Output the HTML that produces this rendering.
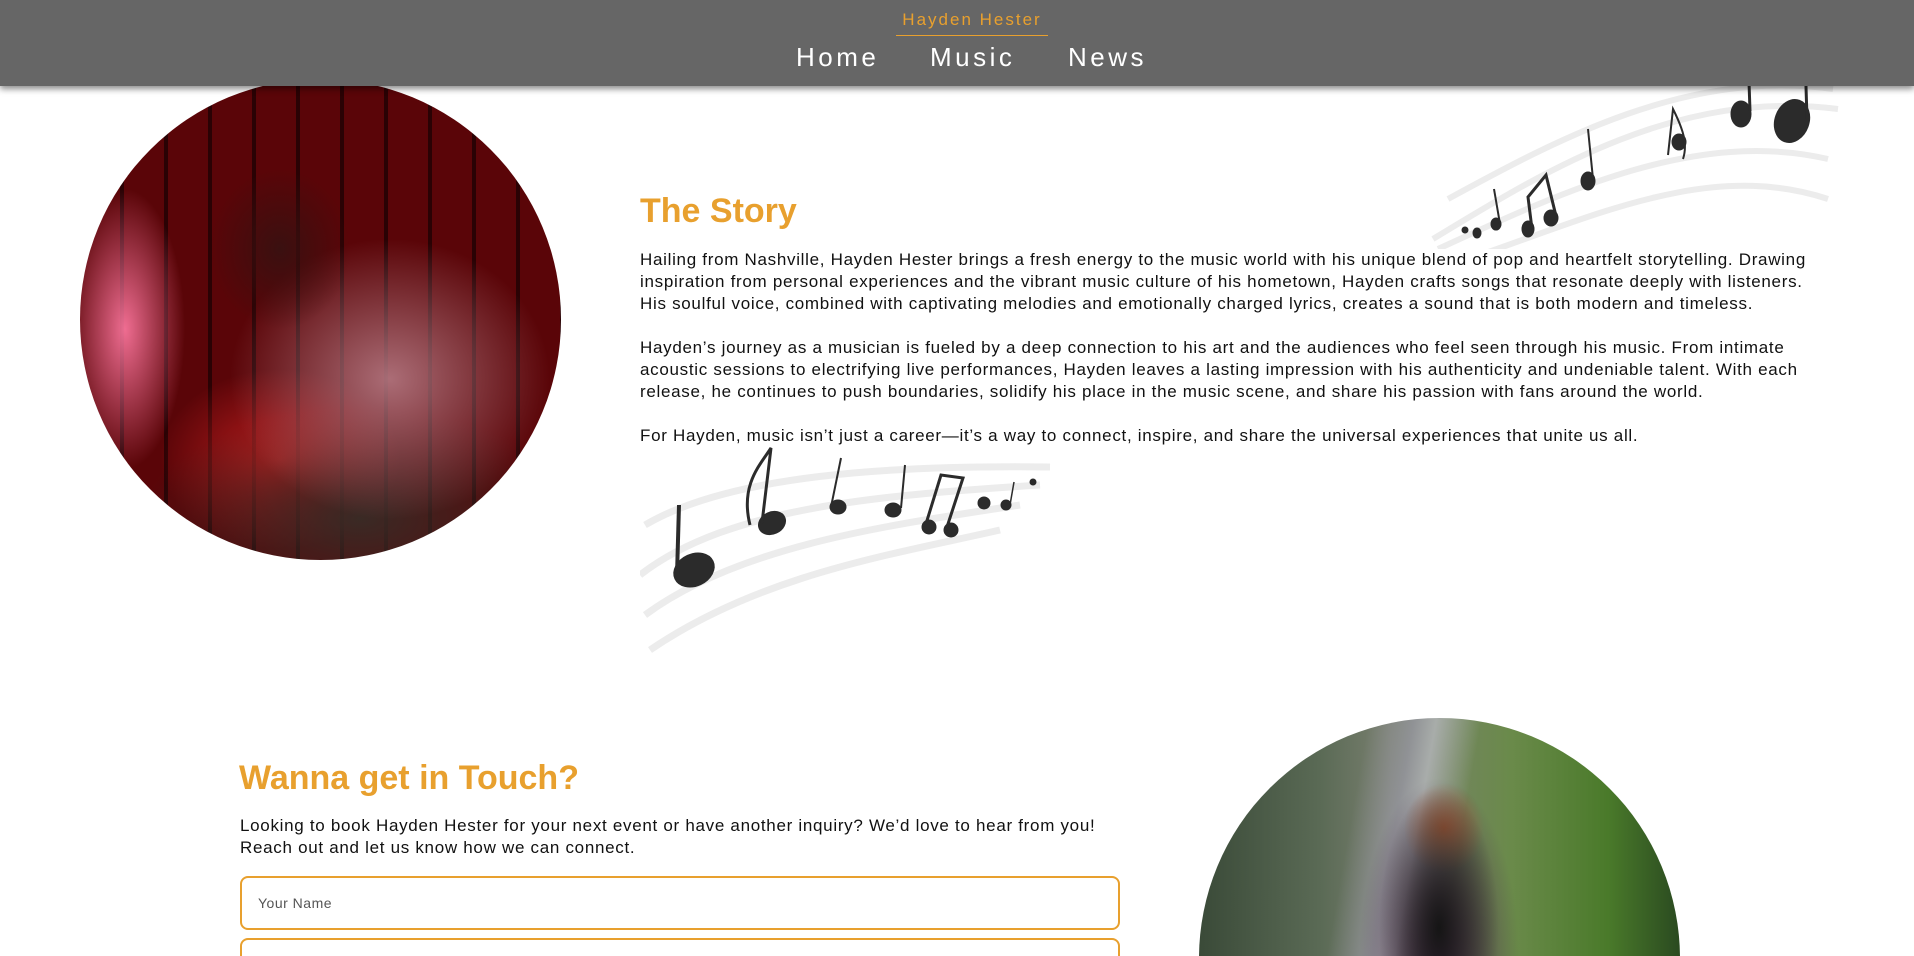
<!DOCTYPE html>
<html><head><meta charset="utf-8"><style>
*{margin:0;padding:0;box-sizing:border-box}
html,body{width:1914px;height:956px;overflow:hidden;background:#fff;font-family:"Liberation Sans",sans-serif;color:#111}
#wrap{position:relative;width:1914px;height:956px;overflow:hidden}
.nav{position:absolute;left:0;top:0;width:1914px;height:86px;background:#666;box-shadow:0 3px 6px rgba(0,0,0,.45);z-index:5}
.brand{position:absolute;left:896px;top:10px;width:152px;text-align:center;color:#e8a02e;font-size:17px;letter-spacing:2px;padding-bottom:5px;border-bottom:1.5px solid #e8a02e}
.links a{position:absolute;top:42px;color:#fff;font-size:26px;letter-spacing:3.5px;text-decoration:none}
.circle{position:absolute;border-radius:50%;overflow:hidden}
h2{position:absolute;color:#e8a02e;font-size:34px;font-weight:bold;letter-spacing:0}
.p{position:absolute;font-size:17px;line-height:22px;letter-spacing:.7px;white-space:nowrap}
.inp{position:absolute;left:240px;width:880px;border:2px solid #e8a02e;border-radius:8px;background:#fff}
</style></head><body><div id="wrap">
<div class="nav">
 <div class="brand">Hayden Hester</div>
 <div class="links"><a style="left:796px">Home</a><a style="left:930px">Music</a><a style="left:1068px">News</a></div>
</div>

<div class="circle" style="left:80px;top:79px;width:481px;height:481px;background:
radial-gradient(ellipse 60px 140px at 45px 250px,rgba(255,120,160,.9),transparent),
radial-gradient(ellipse 70px 80px at 200px 170px,#3a1010,transparent),
radial-gradient(ellipse 160px 140px at 310px 300px,rgba(180,120,130,.9),transparent),
radial-gradient(ellipse 220px 110px at 280px 440px,#3a2a25,transparent),
radial-gradient(ellipse 120px 90px at 200px 380px,rgba(230,40,40,.7),transparent),
repeating-linear-gradient(90deg,#5a0508 0 40px,#2a0204 40px 44px),#4a0406"></div>

<h2 style="left:640px;top:192px">The Story</h2>
<div class="p" style="left:640px;top:249px">Hailing from Nashville, Hayden Hester brings a fresh energy to the music world with his unique blend of pop and heartfelt storytelling. Drawing<br>inspiration from personal experiences and the vibrant music culture of his hometown, Hayden crafts songs that resonate deeply with listeners.<br>His soulful voice, combined with captivating melodies and emotionally charged lyrics, creates a sound that is both modern and timeless.</div>
<div class="p" style="left:640px;top:337px">Hayden’s journey as a musician is fueled by a deep connection to his art and the audiences who feel seen through his music. From intimate<br>acoustic sessions to electrifying live performances, Hayden leaves a lasting impression with his authenticity and undeniable talent. With each<br>release, he continues to push boundaries, solidify his place in the music scene, and share his passion with fans around the world.</div>
<div class="p" style="left:640px;top:425px">For Hayden, music isn’t just a career—it’s a way to connect, inspire, and share the universal experiences that unite us all.</div>

<svg style="position:absolute;left:640px;top:445px" width="420" height="220" viewBox="0 0 420 220">
<g fill="none" stroke="#ececec" stroke-width="7">
<path d="M5 80 C90 30 250 20 410 22"/><path d="M0 130 C90 60 250 50 400 40"/><path d="M5 170 C100 100 250 80 380 60"/><path d="M10 205 C120 130 250 110 360 85"/>
</g>
<g fill="#2b2b2b" stroke="#2b2b2b">
<ellipse cx="54" cy="125" rx="21" ry="16" transform="rotate(-25 54 125)"/><line x1="37" y1="130" x2="39" y2="60" stroke-width="4"/>
<ellipse cx="132" cy="78" rx="14" ry="11" transform="rotate(-25 132 78)"/><path d="M122 78 L131 3 C120 20 100 40 110 80" fill="none" stroke-width="3"/>
<ellipse cx="198" cy="62" rx="8" ry="7"/><line x1="191" y1="62" x2="201" y2="13" stroke-width="2"/>
<ellipse cx="253" cy="65" rx="8" ry="7"/><line x1="261" y1="63" x2="265" y2="20" stroke-width="2"/>
<ellipse cx="289" cy="82" rx="7" ry="7"/><ellipse cx="311" cy="85" rx="7" ry="7"/><path d="M285 82 L301 30 L323 33 L306 85" fill="none" stroke-width="3"/>
<ellipse cx="344" cy="58" rx="6" ry="6"/><ellipse cx="366" cy="60" rx="5" ry="5"/><line x1="370" y1="60" x2="374" y2="37" stroke-width="1.5"/>
<circle cx="393" cy="37" r="3"/>
</g></svg>

<svg style="position:absolute;left:1428px;top:49px" width="420" height="200" viewBox="0 0 420 200">
<g fill="none" stroke="#ececec" stroke-width="6">
<path d="M5 190 C120 120 250 40 410 60"/><path d="M20 150 C130 90 260 20 405 40"/><path d="M10 200 C140 140 270 80 400 110"/><path d="M40 210 C160 170 280 110 400 150"/>
</g>
<g fill="#2b2b2b" stroke="#2b2b2b">
<ellipse cx="364" cy="72" rx="17" ry="22" transform="rotate(20 364 72)"/><line x1="379" y1="70" x2="377" y2="5" stroke-width="3"/>
<ellipse cx="313" cy="65" rx="10" ry="13"/><line x1="322" y1="62" x2="320" y2="4" stroke-width="3"/>
<ellipse cx="251" cy="93" rx="7" ry="8"/><path d="M240 106 L245 60 C255 80 260 95 255 110" fill="none" stroke-width="2"/>
<ellipse cx="160" cy="132" rx="7" ry="9"/><line x1="165" y1="130" x2="160" y2="80" stroke-width="2"/>
<ellipse cx="123" cy="169" rx="7" ry="8"/><ellipse cx="100" cy="180" rx="6" ry="8"/><path d="M128 167 L118 126 L100 148 L104 180" fill="none" stroke-width="3"/>
<ellipse cx="68" cy="175" rx="5" ry="6"/><line x1="72" y1="175" x2="66" y2="140" stroke-width="2"/>
<ellipse cx="49" cy="184" rx="4" ry="5"/><ellipse cx="37" cy="181" rx="3" ry="3"/>
</g></svg>

<h2 style="left:239px;top:759px">Wanna get in Touch?</h2>
<div class="p" style="left:240px;top:815px">Looking to book Hayden Hester for your next event or have another inquiry? We’d love to hear from you!<br>Reach out and let us know how we can connect.</div>
<div class="inp" style="top:876px;height:54px"><span style="position:absolute;left:16px;top:17px;font-size:14px;color:#555;letter-spacing:.5px">Your Name</span></div>
<div style="position:absolute;left:240px;top:938px;width:880px;height:18px;overflow:hidden"><div class="inp" style="left:0;top:0;height:40px"></div></div>

<div style="position:absolute;left:1199px;top:718px;width:481px;height:238px;overflow:hidden">
<div class="circle" style="left:0;top:0;width:481px;height:481px;background:
radial-gradient(ellipse 60px 140px at 240px 210px,#151515,transparent),
radial-gradient(ellipse 40px 45px at 245px 110px,#a05a3a,transparent),
radial-gradient(ellipse 80px 180px at 240px 240px,#4a2a4a,transparent),
linear-gradient(100deg,transparent 30%,rgba(150,150,160,.8) 38%,rgba(190,190,200,.7) 42%,transparent 50%),
linear-gradient(90deg,#3a4a38 0%,#5a6a55 25%,#7a8070 40%,#6a8a4a 65%,#4a7a2a 85%,#2a4a20 100%)"></div>
</div>
</div></body></html>
